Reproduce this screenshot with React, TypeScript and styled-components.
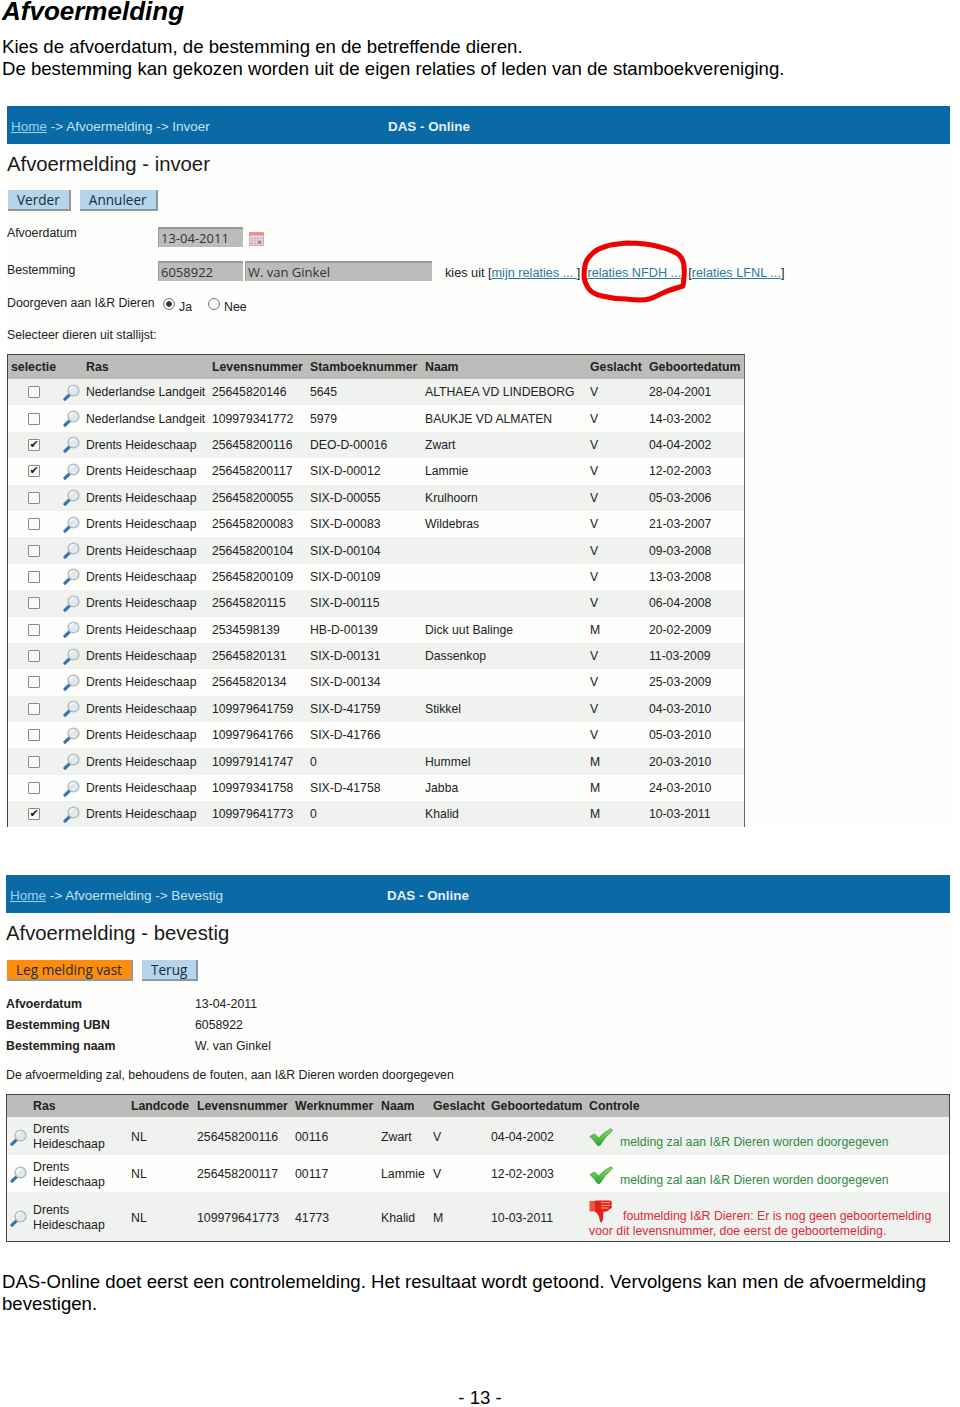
import React from 'react';
import styled, { createGlobalStyle } from 'styled-components';

const sans = `"Liberation Sans", Arial, sans-serif`;

const GlobalStyle = createGlobalStyle`
    html, body {
        margin: 0;
        padding: 0;
        background: #ffffff;
        color: #000000;
        font-family: ${sans};
    }
`;

const animals = [
    ['Nederlandse Landgeit', '25645820146', '5645', 'ALTHAEA VD LINDEBORG', 'V', '28-04-2001', false],
    ['Nederlandse Landgeit', '109979341772', '5979', 'BAUKJE VD ALMATEN', 'V', '14-03-2002', false],
    ['Drents Heideschaap', '256458200116', 'DEO-D-00016', 'Zwart', 'V', '04-04-2002', true],
    ['Drents Heideschaap', '256458200117', 'SIX-D-00012', 'Lammie', 'V', '12-02-2003', true],
    ['Drents Heideschaap', '256458200055', 'SIX-D-00055', 'Krulhoorn', 'V', '05-03-2006', false],
    ['Drents Heideschaap', '256458200083', 'SIX-D-00083', 'Wildebras', 'V', '21-03-2007', false],
    ['Drents Heideschaap', '256458200104', 'SIX-D-00104', '', 'V', '09-03-2008', false],
    ['Drents Heideschaap', '256458200109', 'SIX-D-00109', '', 'V', '13-03-2008', false],
    ['Drents Heideschaap', '25645820115', 'SIX-D-00115', '', 'V', '06-04-2008', false],
    ['Drents Heideschaap', '2534598139', 'HB-D-00139', 'Dick uut Balinge', 'M', '20-02-2009', false],
    ['Drents Heideschaap', '25645820131', 'SIX-D-00131', 'Dassenkop', 'V', '11-03-2009', false],
    ['Drents Heideschaap', '25645820134', 'SIX-D-00134', '', 'V', '25-03-2009', false],
    ['Drents Heideschaap', '109979641759', 'SIX-D-41759', 'Stikkel', 'V', '04-03-2010', false],
    ['Drents Heideschaap', '109979641766', 'SIX-D-41766', '', 'V', '05-03-2010', false],
    ['Drents Heideschaap', '109979141747', '0', 'Hummel', 'M', '20-03-2010', false],
    ['Drents Heideschaap', '109979341758', 'SIX-D-41758', 'Jabba', 'M', '24-03-2010', false],
    ['Drents Heideschaap', '109979641773', '0', 'Khalid', 'M', '10-03-2011', true],
] as const;

const Magnifier = () => (
    <MagnifierSvg viewBox="0 0 17 17">
        <path d="M2 15.2 L6.4 10.8" fill="none" stroke="#3573b5" strokeWidth="3.2" strokeLinecap="round" />
        <circle cx="10.5" cy="6.5" r="5.4" fill="#e3e8ea" stroke="#b3babe" strokeWidth="1.4" />
        <path d="M7 6.2 A3.6 3.6 0 0 1 10.6 2.8" fill="none" stroke="#ffffff" strokeWidth="1.3" />
    </MagnifierSvg>
);

const CheckMark = () => (
    <CheckSvg viewBox="0 0 24 18">
        <defs>
            <linearGradient id="okGreen" x1="0" y1="0" x2="0" y2="1">
                <stop offset="0" stopColor="#8fe36b" />
                <stop offset="1" stopColor="#2ca52c" />
            </linearGradient>
        </defs>
        <path d="M1 8.5 L5.5 6 L9.8 10 Q15 4 22 0.8 L23.4 2.4 Q16 8.6 10.8 17.4 L8.6 17.4 Q5.4 12.4 1 8.5 Z" fill="url(#okGreen)" stroke="#2f9a35" strokeWidth="0.8" />
    </CheckSvg>
);

const ThumbDown = () => (
    <ThumbSvg viewBox="0 0 24 24">
        <path d="M0.5 2 H6 V12.5 H0.5 Z" fill="#f0553a" />
        <path d="M6 1.5 H20 Q23 1.5 23 4 Q23 5.6 22 6 Q23.4 7 22.8 8.6 Q22 10.5 20 10.4 Q20 12 17 12.4 L14.5 13 L14 20 Q13.4 23.8 11.5 23.4 Q10.4 22 10.2 18 Q8.8 14.4 6 12.5 Z" fill="#e4201c" />
        <path d="M12 3.6 H21 M12 6.4 H21 M12 9 H19.5" stroke="#f7a08c" strokeWidth="1" fill="none" />
    </ThumbSvg>
);

const CalendarIcon = () => (
    <CalendarSvg viewBox="0 0 15 14">
        <rect x="0.5" y="0.5" width="14" height="13" fill="#f7e2df" stroke="#e0a8a4" />
        <rect x="0.5" y="0.5" width="14" height="3" fill="#e58f88" />
        <path d="M3 4 V13 M6 4 V13 M9 4 V13 M12 4 V13 M1 6.5 H14 M1 9 H14 M1 11.5 H14" stroke="#b9aacb" strokeWidth="0.8" fill="none" />
        <rect x="9" y="9" width="3" height="2.5" fill="#8a7fb0" />
    </CalendarSvg>
);

const App: React.FC = () => {
    return (
        <Page>
            <GlobalStyle />
            <DocTitle>Afvoermelding</DocTitle>
            <IntroText>
                Kies de afvoerdatum, de bestemming en de betreffende dieren.<br />
                De bestemming kan gekozen worden uit de eigen relaties of leden van de stamboekvereniging.
            </IntroText>

            <EntryScreen>
                <TopBar>
                    <Crumbs><a href="#home">Home</a> -&gt; Afvoermelding -&gt; Invoer</Crumbs>
                    <Brand>DAS - Online</Brand>
                </TopBar>
                <ScreenTitle>Afvoermelding - invoer</ScreenTitle>
                <ButtonRow>
                    <ActionButton>Verder</ActionButton>
                    <ActionButton>Annuleer</ActionButton>
                </ButtonRow>

                <FormRow>
                    <FormLabel>Afvoerdatum</FormLabel>
                    <FakeInput width={85}>13-04-2011</FakeInput>
                    <CalendarIcon />
                </FormRow>
                <FormRow>
                    <FormLabel drop={2}>Bestemming</FormLabel>
                    <FakeInput width={85}>6058922</FakeInput>
                    <FakeInput width={187}>W. van Ginkel</FakeInput>
                    <RelationLinks>
                        kies uit [<a href="#mijn">mijn relaties ... </a>] [<a href="#nfdh">relaties NFDH ...</a>] [<a href="#lfnl">relaties LFNL ...</a>]
                        <RedCircle viewBox="0 0 108 64">
                            <path d="M4 36 C4 26 6 20 11 16 C15 11 20 9 27 7 C33 5 40 5 47 4 C58 4 70 5 80 8 C88 10 95 12 99 16 C103 20 104 23 104 28 C105 34 104 40 103 47 C96 49 89 51 83 54 C78 56 73 59 69 60 C62 62 54 61 46 60 C38 60 30 59 22 57 C17 56 12 54 9 50 C6 46 4 41 4 36 Z" />
                        </RedCircle>
                    </RelationLinks>
                </FormRow>
                <ChoiceRow>
                    <FormLabel>Doorgeven aan I&amp;R Dieren</FormLabel>
                    <Radio checked />
                    <RadioText>Ja</RadioText>
                    <Radio />
                    <RadioText>Nee</RadioText>
                </ChoiceRow>
                <SelectLine>Selecteer dieren uit stallijst:</SelectLine>

                <StableTable>
                    <StableHead>
                        <span>selectie</span>
                        <span>Ras</span>
                        <span>Levensnummer</span>
                        <span>Stamboeknummer</span>
                        <span>Naam</span>
                        <span>Geslacht</span>
                        <span>Geboortedatum</span>
                    </StableHead>
                    {animals.map((animal, index) => (
                        <StableRow key={animal[1]} odd={index % 2 === 0}>
                            <SelectCell>
                                <CheckBox>{animal[6] ? '✔' : ''}</CheckBox>
                                <Magnifier />
                            </SelectCell>
                            <span>{animal[0]}</span>
                            <span>{animal[1]}</span>
                            <span>{animal[2]}</span>
                            <span>{animal[3]}</span>
                            <span>{animal[4]}</span>
                            <span>{animal[5]}</span>
                        </StableRow>
                    ))}
                </StableTable>
            </EntryScreen>

            <ConfirmScreen>
                <TopBar>
                    <Crumbs><a href="#home">Home</a> -&gt; Afvoermelding -&gt; Bevestig</Crumbs>
                    <Brand>DAS - Online</Brand>
                </TopBar>
                <ScreenTitle>Afvoermelding - bevestig</ScreenTitle>
                <ConfirmButtons>
                    <ActionButton primary>Leg melding vast</ActionButton>
                    <ActionButton>Terug</ActionButton>
                </ConfirmButtons>
                <InfoList>
                    <b>Afvoerdatum</b><span>13-04-2011</span>
                    <b>Bestemming UBN</b><span>6058922</span>
                    <b>Bestemming naam</b><span>W. van Ginkel</span>
                </InfoList>
                <ConfirmNote>De afvoermelding zal, behoudens de fouten, aan I&amp;R Dieren worden doorgegeven</ConfirmNote>

                <ConfirmTable>
                    <ConfirmHead>
                        <span />
                        <span>Ras</span>
                        <span>Landcode</span>
                        <span>Levensnummer</span>
                        <span>Werknummer</span>
                        <span>Naam</span>
                        <span>Geslacht</span>
                        <span>Geboortedatum</span>
                        <span>Controle</span>
                    </ConfirmHead>
                    <ConfirmRow odd height={38}>
                        <Magnifier />
                        <span>Drents Heideschaap</span>
                        <span>NL</span>
                        <span>256458200116</span>
                        <span>00116</span>
                        <span>Zwart</span>
                        <span>V</span>
                        <span>04-04-2002</span>
                        <OkMessage><CheckMark />melding zal aan I&amp;R Dieren worden doorgegeven</OkMessage>
                    </ConfirmRow>
                    <ConfirmRow height={37}>
                        <Magnifier />
                        <span>Drents Heideschaap</span>
                        <span>NL</span>
                        <span>256458200117</span>
                        <span>00117</span>
                        <span>Lammie</span>
                        <span>V</span>
                        <span>12-02-2003</span>
                        <OkMessage><CheckMark />melding zal aan I&amp;R Dieren worden doorgegeven</OkMessage>
                    </ConfirmRow>
                    <ConfirmRow odd height={50}>
                        <Magnifier />
                        <span>Drents Heideschaap</span>
                        <span>NL</span>
                        <span>109979641773</span>
                        <span>41773</span>
                        <span>Khalid</span>
                        <span>M</span>
                        <span>10-03-2011</span>
                        <ErrorMessage><ThumbDown />foutmelding I&amp;R Dieren: Er is nog geen geboortemelding voor dit levensnummer, doe eerst de geboortemelding.</ErrorMessage>
                    </ConfirmRow>
                </ConfirmTable>
            </ConfirmScreen>

            <OutroText>
                DAS-Online doet eerst een controlemelding. Het resultaat wordt getoond. Vervolgens kan men de afvoermelding bevestigen.
            </OutroText>
            <PageNumber>- 13 -</PageNumber>
        </Page>
    );
};

const Page = styled.div`
    width: 960px;
    height: 1407px;
    overflow: hidden;
`;

const DocTitle = styled.h1`
    margin: 0;
    padding-left: 2px;
    font-size: 26px;
    font-weight: 700;
    font-style: italic;
    line-height: 23px;
`;

const IntroText = styled.p`
    margin: 13px 0 0;
    padding-left: 2px;
    font-size: 18.6px;
    line-height: 21.5px;
`;

const OutroText = styled.p`
    margin: 29px 0 0;
    padding: 0 20px 0 2px;
    font-size: 18.6px;
    line-height: 21.5px;
`;

const PageNumber = styled.div`
    margin-top: 73px;
    text-align: center;
    font-size: 18.6px;
    line-height: 21px;
`;

const EntryScreen = styled.section`
    margin: 27px 10px 0 7px;
    height: 721px;
    background: #fdfdfb;
    font-size: 12.3px;
    color: #222222;
`;

const ConfirmScreen = styled.section`
    margin: 48px 10px 0 6px;
    height: 367px;
    background: #fdfdfb;
    font-size: 12.3px;
    color: #222222;
`;

const TopBar = styled.div`
    display: flex;
    align-items: center;
    box-sizing: border-box;
    height: 38px;
    padding: 3px 0 0 4px;
    background: #0a6aa5;
    color: #c3e2f2;
    font-size: 13.5px;
`;

const Crumbs = styled.div`
    width: 377px;

    a {
        color: #9fd0ee;
    }
`;

const Brand = styled.div`
    color: #e6f1f6;
    font-size: 13.4px;
    font-weight: 700;
`;

const ScreenTitle = styled.h2`
    margin: 8px 0 0;
    font-size: 20.3px;
    font-weight: 400;
    line-height: 24px;
    color: #1a1a1a;
`;

const ButtonRow = styled.div`
    display: flex;
    gap: 9px;
    margin: 14px 0 0 1px;
`;

const ConfirmButtons = styled(ButtonRow)`
    margin-top: 15px;
`;

const ActionButton = styled.div<{ primary?: boolean }>`
    box-sizing: border-box;
    height: 21px;
    padding: 0 9px;
    background: ${(props) => (props.primary ? '#ff8c0a' : '#b4d5ea')};
    border-right: 2px solid #8d9aa3;
    border-bottom: 2px solid #8d9aa3;
    font-family: "Open Sans", sans-serif;
    font-size: 13.6px;
    line-height: 20px;
    color: #1c2c38;
`;

const FormRow = styled.div`
    display: flex;
    align-items: flex-start;
    height: 34px;
    margin-top: 16px;

    & + & {
        margin-top: 0;
    }
`;

const FormLabel = styled.div<{ drop?: number }>`
    flex: 0 0 151px;
    line-height: 14px;
    margin-top: ${(props) => props.drop ?? -1}px;
`;

const FakeInput = styled.div<{ width: number }>`
    box-sizing: border-box;
    width: ${(props) => props.width}px;
    height: 20px;
    padding-left: 2px;
    background: #bcbcba;
    border-top: 2px solid #9a9a98;
    border-left: 1px solid #9a9a98;
    font-family: "Open Sans", sans-serif;
    font-size: 13px;
    line-height: 18px;
    color: #333333;

    & + & {
        margin-left: 2px;
    }
`;

const RelationLinks = styled.div`
    position: relative;
    margin: 5px 0 0 13px;
    font-size: 12.7px;
    line-height: 14px;
    white-space: nowrap;

    a {
        color: #2e7a9e;
    }
`;

const RedCircle = styled.svg`
    position: absolute;
    left: 135px;
    top: -27px;
    width: 108px;
    height: 64px;

    path {
        fill: none;
        stroke: #ee0000;
        stroke-width: 5;
        stroke-linejoin: round;
    }
`;

const ChoiceRow = styled.div`
    display: flex;
    align-items: center;
    height: 16px;
`;

const Radio = styled.span<{ checked?: boolean }>`
    box-sizing: border-box;
    width: 12px;
    height: 12px;
    margin: 2px 0 0 ${(props) => (props.checked ? '5px' : '0')};
    border: 1px solid #777777;
    border-radius: 50%;
    background: ${(props) => (props.checked ? 'radial-gradient(circle, #333333 0 2.5px, #f4f4f4 3px)' : '#fbfbfb')};
`;

const RadioText = styled.span`
    margin: 8px 16px 0 4px;

    &:last-child {
        margin-right: 0;
    }
`;

const SelectLine = styled.div`
    margin-top: 17px;
    line-height: 14px;
`;

const StableTable = styled.div`
    margin-top: 12px;
    width: 738px;
    height: 473px;
    box-sizing: border-box;
    border-top: 1.5px solid #444444;
    border-left: 1.5px solid #444444;
    border-right: 1px solid #666666;
    overflow: hidden;
`;

const stableColumns = '78px 126px 98px 115px 165px 59px 95px';

const StableHead = styled.div`
    display: grid;
    grid-template-columns: ${stableColumns};
    align-items: center;
    height: 24px;
    background: #bcbdbb;
    font-weight: 700;
    color: #222222;

    span:first-child {
        padding-left: 3px;
    }
`;

const StableRow = styled.div<{ odd: boolean }>`
    display: grid;
    grid-template-columns: ${stableColumns};
    align-items: center;
    height: 26.4px;
    background: ${(props) => (props.odd ? '#f0f2f0' : '#fdfdfb')};
    font-size: 12.2px;
    white-space: nowrap;
`;

const SelectCell = styled.div`
    display: flex;
    align-items: center;
    padding-left: 20px;
    gap: 23px;
`;

const CheckBox = styled.span`
    box-sizing: border-box;
    width: 12px;
    height: 12px;
    border: 1px solid #8a8a8a;
    border-radius: 1px;
    background: #fafafa;
    font-family: "DejaVu Sans", sans-serif;
    font-size: 11px;
    line-height: 10px;
    text-align: center;
    color: #222222;
`;

const MagnifierSvg = styled.svg`
    width: 17px;
    height: 17px;
    flex: none;
`;

const CheckSvg = styled.svg`
    width: 24px;
    height: 18px;
    flex: none;
    margin-right: 7px;
    vertical-align: 0;
`;

const ThumbSvg = styled.svg`
    width: 24px;
    height: 24px;
    margin-right: 10px;
    vertical-align: -3px;
`;

const CalendarSvg = styled.svg`
    width: 15px;
    height: 14px;
    margin: 5px 0 0 6px;
`;

const InfoList = styled.div`
    display: grid;
    grid-template-columns: 189px 1fr;
    grid-auto-rows: 21px;
    align-items: center;
    margin-top: 12px;

    b {
        color: #222222;
    }
`;

const ConfirmNote = styled.div`
    margin-top: 11px;
    line-height: 16px;
`;

const ConfirmTable = styled.div`
    margin-top: 11px;
    box-sizing: border-box;
    height: 148px;
    border: 1.5px solid #444444;
    overflow: hidden;
`;

const confirmColumns = '26px 98px 66px 98px 86px 52px 58px 98px 361px';

const ConfirmHead = styled.div`
    display: grid;
    grid-template-columns: ${confirmColumns};
    align-items: center;
    height: 22px;
    background: #bcbdbb;
    font-weight: 700;
`;

const ConfirmRow = styled.div<{ odd?: boolean; height: number }>`
    display: grid;
    grid-template-columns: ${confirmColumns};
    align-items: center;
    box-sizing: border-box;
    height: ${(props) => props.height}px;
    padding-top: 2px;
    background: ${(props) => (props.odd ? '#f0f2f0' : '#fdfdfb')};
    line-height: 15px;

    > svg {
        margin-left: 3px;
    }
`;

const OkMessage = styled.div`
    margin-top: 4px;
    color: #2f8a44;
    white-space: nowrap;
`;

const ErrorMessage = styled.div`
    margin-top: 2px;
    color: #dd2a35;
    line-height: 15px;
`;

export default App;
